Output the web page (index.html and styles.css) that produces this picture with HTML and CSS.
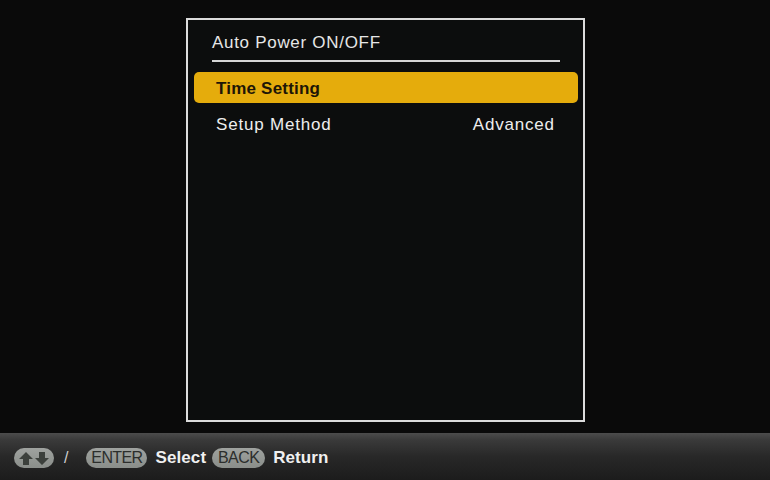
FILE: index.html
```html
<!DOCTYPE html>
<html>
<head>
<meta charset="utf-8">
<link rel="stylesheet" href="styles.css">
</head>
<body>
<div class="screen">
  <div class="stage">
    <div class="panel">
      <div class="title">Auto Power ON/OFF</div>
      <div class="rule"></div>
      <div class="item selected"><span>Time Setting</span></div>
      <div class="item"><span>Setup Method</span><span class="value">Advanced</span></div>
    </div>
  </div>
  <div class="footer">
    <span class="pill arrows">
      <svg width="34" height="16" viewBox="0 0 34 16">
        <path d="M9 2 L16 9 L12 9 L12 15 L6 15 L6 9 L2 9 Z" fill="#3c403c"/>
        <path d="M25 15 L32 8 L28 8 L28 2 L22 2 L22 8 L18 8 Z" fill="#3c403c"/>
      </svg>
    </span>
    <span class="slash">/</span>
    <span class="pill key enter">ENTER</span>
    <span class="label">Select</span>
    <span class="pill key back">BACK</span>
    <span class="label">Return</span>
  </div>
</div>
</body>
</html>
```
FILE: styles.css
```css
html, body {
  margin: 0;
  padding: 0;
  background: #0a0a0a;
}
.screen {
  width: 770px;
  height: 480px;
  display: flex;
  flex-direction: column;
  font-family: "Liberation Sans", Arial, sans-serif;
  overflow: hidden;
}
.stage {
  height: 433px;
  padding-top: 18px;
  padding-left: 186px;
  box-sizing: border-box;
}
.panel {
  width: 399px;
  height: 404px;
  box-sizing: border-box;
  border: 2px solid #dcdcdc;
  background: #0c0d0d;
  padding: 0 5px 0 6px;
}
.title {
  color: #e6e6e6;
  font-size: 17px;
  letter-spacing: 0.7px;
  margin: 12px 18px 0 18px;
  height: 22px;
  line-height: 22px;
}
.rule {
  height: 2px;
  background: #d6d6d6;
  margin: 6px 18px 10px 18px;
}
.item {
  height: 31px;
  display: flex;
  align-items: center;
  justify-content: space-between;
  padding: 0 24px 0 22px;
  color: #eeeeee;
  font-size: 17px;
  letter-spacing: 0.8px;
  margin-bottom: 6px;
}
.item .value {
  margin-right: -0.8px;
}
.item.selected {
  background: #e5ac0c;
  border-radius: 5px;
  color: #1e1606;
  font-weight: bold;
  letter-spacing: 0.2px;
  padding-top: 2px;
  box-sizing: border-box;
}
.footer {
  height: 47px;
  background: linear-gradient(#4c4c4c, #3a3a3a 15%, #282828 50%, #1c1c1c);
  display: flex;
  align-items: center;
  padding-left: 14px;
  padding-top: 2px;
  box-sizing: border-box;
}
.pill {
  background: linear-gradient(#9fa29f, #8a8e8a);
  border-radius: 10px;
  height: 20px;
  display: inline-flex;
  align-items: center;
  justify-content: center;
  box-sizing: border-box;
}
.arrows {
  width: 40px;
}
.key {
  color: #2c2e2c;
  font-size: 16px;
  letter-spacing: -0.6px;
}
.enter {
  width: 61px;
  margin-left: 18px;
}
.back {
  width: 53px;
  margin-left: 6px;
}
.slash {
  color: #d0d0d0;
  font-size: 16px;
  margin-left: 10px;
}
.label {
  color: #f0f0f0;
  font-size: 17px;
  font-weight: bold;
  letter-spacing: 0.1px;
  margin-left: 8px;
}
```
